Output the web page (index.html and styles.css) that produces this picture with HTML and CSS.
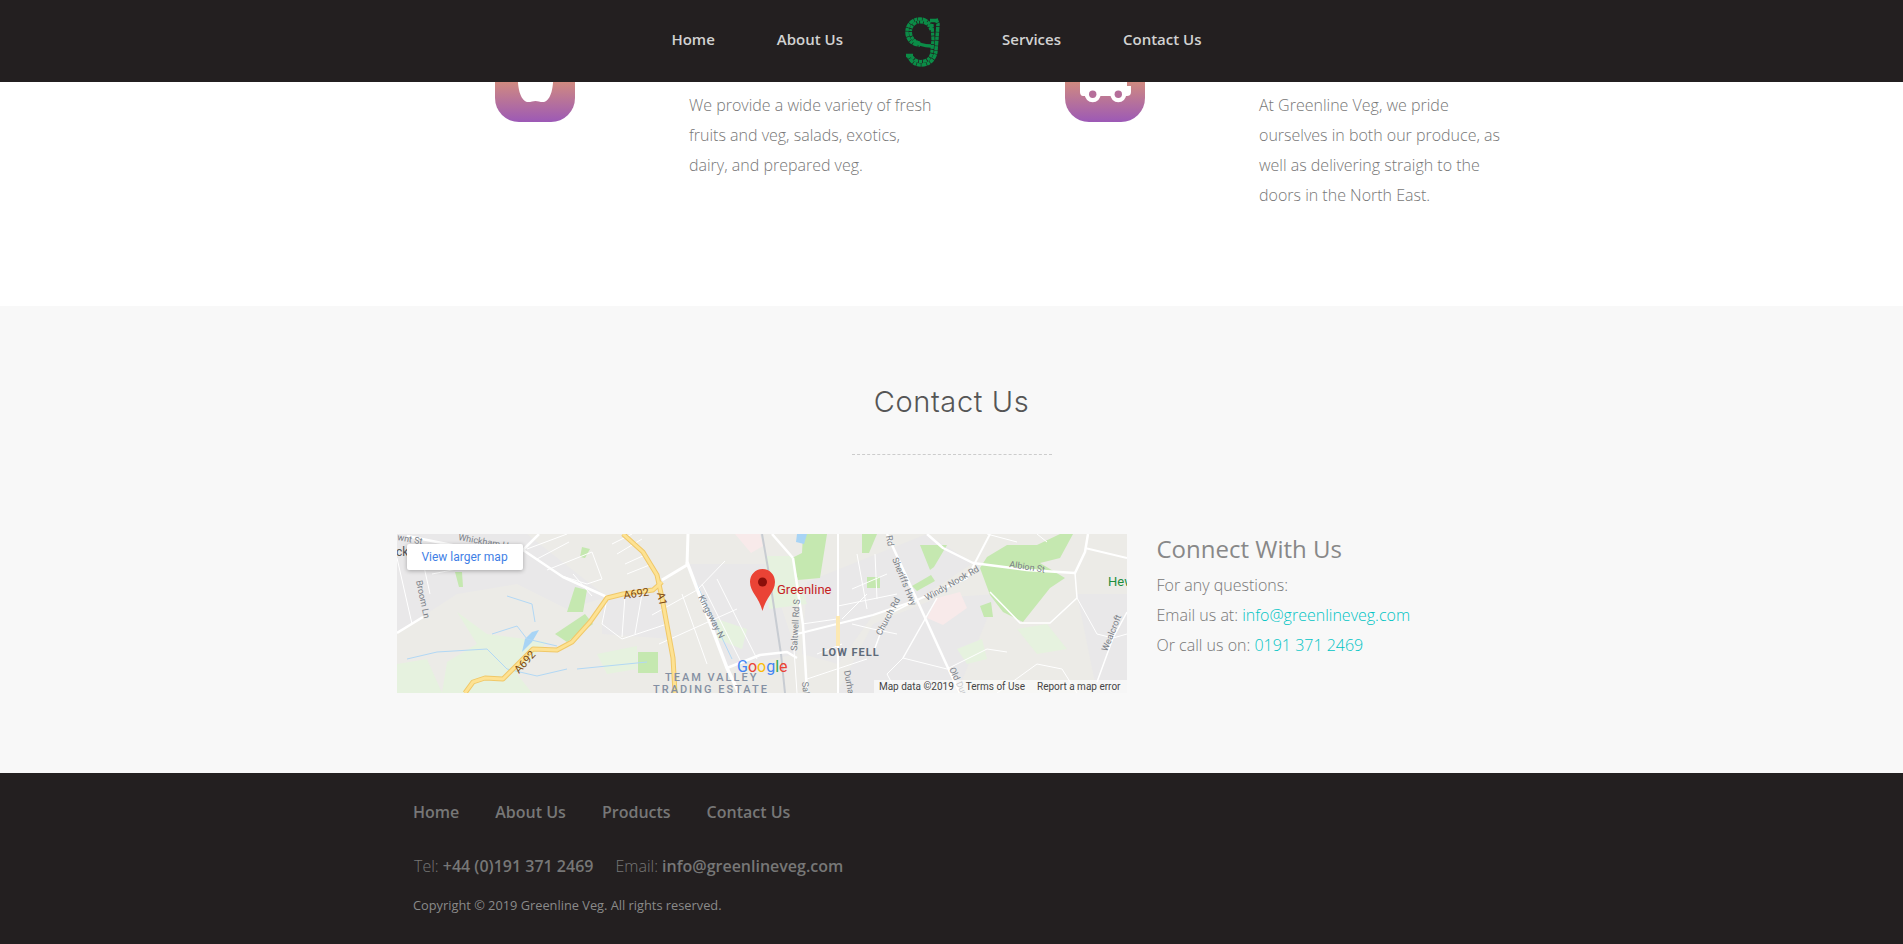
FILE: index.html
```html
<!DOCTYPE html>
<html lang="en">
<head>
    <meta charset="UTF-8">
    <meta name="viewport" content="width=device-width, initial-scale=1.0">
    <title>Greenline Veg</title>
    <link rel="stylesheet" href="styles.css">
</head>
<body>

    <!-- Fixed header, sits over the services row -->
    <header class="site-header">
        <nav class="main-nav">
            <a href="#">Home</a>
            <a href="#">About Us</a>
            <svg class="logo" viewBox="0 0 36 51" width="36" height="51" fill="none" stroke="#0b8c47">
                <path d="M27 12 C24 6 20 3 15 3 C7 3 2 9 2 16 C2 24 8 29 15 29" stroke-width="3.500" stroke-dasharray="4 .6 3 .6 5 .6"/>
                <path d="M26 14 C24 8 20 6 15 6 C9 6 5.500 11 5.500 16 C5.500 22 10 26 15 27" stroke-width="3" stroke-dasharray="3 .8 2 1 4 .8"/>
                <path d="M31 3 L33 8 L32 22 L31 34 C31 42 25 49 16 49 C10 49 5 45 3 39" stroke-width="3.500" stroke-dasharray="4 .6 3 .6 5 .6"/>
                <path d="M27 8 L28 24 L27 34 C27 41 23 45.500 16 45.500 C11 45.500 8 43 7 40" stroke-width="3.200" stroke-dasharray="3 .8 4 .8"/>
                <path d="M8 24 C14 29 20 30 26 30" stroke-width="3.500"/>
                <path d="M1 39.500 L8 39.500" stroke-width="3.500"/>
                <path d="M25 4.500 L33 4.500" stroke-width="3.500"/>
            </svg>
            <a href="#">Services</a>
            <a href="#">Contact Us</a>
        </nav>
    </header>

    <section class="services">
        <div class="container services-row">
            <div class="service">
                <div class="service-icon">
                    <svg viewBox="0 0 80 80" width="80" height="80" fill="#fff">
                        <path d="M23 30 H58 C59 45 56 58 49 60 C46 60.500 43 59 40.500 59 C38 59 35 60.500 32 60 C25 58 22 45 23 30 Z"/>
                    </svg>
                </div>
                <p class="service-text">We provide a wide variety of fresh fruits and veg, salads, exotics, dairy, and prepared veg.</p>
            </div>
            <div class="service">
                <div class="service-icon">
                    <svg viewBox="0 0 80 80" width="80" height="80" fill="#fff">
                        <path d="M15 30 H62 V44 H66 V50 C66 53 64 54 62 54 H18 C16 54 15 52 15 50 Z"/>
                        <circle cx="27.700" cy="52.300" r="8"/>
                        <circle cx="53.300" cy="52.300" r="8"/>
                        <circle cx="27.700" cy="52.300" r="3.700" fill="#b56e9a"/>
                        <circle cx="53.300" cy="52.300" r="3.700" fill="#b56e9a"/>
                    </svg>
                </div>
                <p class="service-text">At Greenline Veg, we pride ourselves in both our produce, as well as delivering straigh to the doors in the North East.</p>
            </div>
        </div>
    </section>

    <section class="contact">
        <h2 class="contact-title">Contact Us</h2>
        <div class="title-rule"></div>
        <div class="container contact-row">
            <div class="map">
                <svg class="map-art" viewBox="0 0 730 159" width="730" height="159">
                    <rect width="730" height="159" fill="#ecebe7"/>
                    <!-- built up areas -->
                    <g fill="#e9e8e9">
                        <path d="M0 0 H130 L210 63 L170 75 L120 50 L60 60 L0 99 Z"/>
                        <path d="M205 62 L262 50 L275 105 L205 100 Z"/>
                        <path d="M290 30 L370 30 L400 120 L330 134 Z"/>
                        <path d="M410 48 L530 0 L576 29 L520 66 L476 81 L441 130 L405 120 Z"/>
                        <path d="M540 64 L600 60 L560 159 H440 L476 90 Z"/>
                        <path d="M680 60 H730 V159 H700 Z"/>
                    </g>
                    <!-- parks -->
                    <g fill="#e6f2df">
                        <path d="M60 78 L90 100 L150 108 L120 140 L135 159 H45 L50 128 L80 110 Z"/>
                        <path d="M0 130 L30 125 L45 159 H0 Z"/>
                        <path d="M368 22 H395 L401 46 L410 70 L372 75 Z"/>
                        <path d="M620 95 L650 90 L670 115 L640 120 Z"/>
                        <path d="M560 115 L585 105 L590 125 L570 130 Z"/>
                        <path d="M320 85 L350 95 L345 115 L320 105 Z"/>
                        <path d="M200 120 L240 112 L240 135 L210 140 Z"/>
                    </g>
                    <g fill="#c5e8b0">
                        <path d="M406 0 H430 L423 44 L401 46 L395 24 L405 19 Z"/>
                        <path d="M465 0 H480 L472 19 L465 19 Z"/>
                        <path d="M470 43 H483 V54 H470 Z"/>
                        <path d="M523 11 L550 11 L537 33 L533 36 Z"/>
                        <path d="M515 52 L534 41 L538 47 L520 57 Z"/>
                        <path d="M590 23 L610 11 L640 11 L663 0 H676 L663 24 L643 29 L668 44 L653 54 L626 88 L606 78 L593 61 L583 34 Z"/>
                        <path d="M583 72 L594 68 L596 83 L587 83 Z"/>
                        <path d="M178 53 L190 56 L186 78 L170 78 Z"/>
                        <path d="M188 80 L196 90 L170 108 L158 100 Z"/>
                        <path d="M241 118 H261 V139 H241 Z"/>
                        <path d="M58 38 L65 38 L66 53 L62 53 Z"/>
                        <path d="M185 13 L193 15 L188 24 L183 23 Z"/>
                    </g>
                    <path d="M530 84 L540 64 L563 58 L570 74 L546 91 Z" fill="#f8eaea"/>
                    <path d="M338 0 H363 L366 12 L354 19 Z" fill="#f8eaea"/>
                    <!-- water -->
                    <g fill="#a8d4f5">
                        <path d="M125 118 L135 108 L142 96 L135 98 L128 105 Z"/>
                        <path d="M400 0 H410 L407 10 L399 8 Z"/>
                    </g>
                    <g fill="none" stroke="#b2d8f5" stroke-width="1">
                        <path d="M110 62 L135 70 L138 88"/>
                        <path d="M95 100 L120 92 L130 105 L160 112"/>
                        <path d="M10 125 L40 118 L90 115 L110 135 L140 142 L170 135"/>
                        <path d="M180 135 L250 128"/>
                        <path d="M290 30 L335 125"/>
                    </g>
                    <!-- railway -->
                    <path d="M365 0 L372 40 L384 120 L388 159" fill="none" stroke="#c8ccd2" stroke-width="2"/>
                    <!-- small roads -->
                    <g fill="none" stroke="#fff" stroke-width="1">
                        <path d="M0 24 L15 90"/>
                        <path d="M26 28 L33 60 M35 40 L60 35"/>
                        <path d="M130 15 L170 0 M140 25 L172 8 M150 36 L195 18 L205 45 L190 50 L165 42 M176 40 L195 62"/>
                        <path d="M215 10 L235 0 M220 20 L245 5 M228 30 L250 20 M230 40 L255 30"/>
                        <path d="M210 65 L205 90 L225 105 L255 95 L270 90"/>
                        <path d="M228 62 L225 103 M245 60 L238 100"/>
                        <path d="M255 81 L300 56 L328 27 M262 110 L340 75 M285 60 L310 130 M305 50 L345 130 M320 45 L360 125"/>
                        <path d="M460 20 L470 75 M478 20 L480 65 M441 72 L500 60 M445 85 L470 60 M455 55 L490 40"/>
                        <path d="M396 101 L400 159 M405 90 L440 85 M410 145 L470 125 M420 120 L445 110"/>
                        <path d="M455 90 L476 95 L500 100 M506 124 L490 140 L500 159"/>
                        <path d="M506 124 L550 135 L590 115 L610 118"/>
                        <path d="M600 159 L640 130 L665 135 L680 159 M680 64 L700 100 L716 104 L730 100"/>
                        <path d="M590 0 L620 8 M640 0 L650 8"/>
                    </g>
                    <!-- main white roads -->
                    <g fill="none" stroke="#fff" stroke-linejoin="round">
                        <path d="M0 99 L26 83" stroke-width="2.500"/>
                        <path d="M10 2 L60 12 L126 16 L166 43 L210 63" stroke-width="2.500"/>
                        <path d="M126 16 L142 0" stroke-width="2.500"/>
                        <path d="M265 46 L290 31 L291 0" stroke-width="3"/>
                        <path d="M290 28 L330 134 L342 159" stroke-width="3.500"/>
                        <path d="M330 134 L363 121 L390 118 L400 124" stroke-width="2.500"/>
                        <path d="M396 24 L406 91 L410 159" stroke-width="2.500"/>
                        <path d="M375 0 L396 24" stroke-width="2.500"/>
                        <path d="M441 0 V159" stroke-width="2"/>
                        <path d="M490 0 L520 66 L551 134 L563 159" stroke-width="2.500"/>
                        <path d="M396 101 L476 81 L520 66 L570 44 L593 0" stroke-width="2"/>
                        <path d="M530 0 L546 14 L576 29 L630 36 L678 39 L688 18 L691 0" stroke-width="2.500"/>
                        <path d="M688 14 L730 24" stroke-width="2"/>
                        <path d="M478 114 L490 81 L520 66" stroke-width="1.500"/>
                        <path d="M506 124 L540 64" stroke-width="1.500"/>
                        <path d="M678 39 L680 64 L653 89 L623 89 L593 58" stroke-width="1.500"/>
                        <path d="M700 148 L716 104 L730 78" stroke-width="1.500"/>
                    </g>
                    <!-- yellow roads -->
                    <g fill="none" stroke-linejoin="round">
                        <path d="M68 159 L76 148 L88 144 L106 145 L136 115 L160 116 L175 108 L193 88 L210 64 L226 60 L256 56 L265 48" stroke="#f0c868" stroke-width="5"/>
                        <path d="M226 0 L246 18 L260 41 L265 64 L276 124 L278 159" stroke="#f0c868" stroke-width="5"/>
                        <path d="M68 159 L76 148 L88 144 L106 145 L136 115 L160 116 L175 108 L193 88 L210 64 L226 60 L256 56 L265 48" stroke="#fde293" stroke-width="3"/>
                        <path d="M226 0 L246 18 L260 41 L265 64 L276 124 L278 159" stroke="#fde293" stroke-width="3"/>
                        <path d="M441 82 V112" stroke="#fce8b2" stroke-width="4"/>
                    </g>
                    <!-- labels -->
                    <g class="map-label">
                        <text x="0" y="6" transform="rotate(10 0 6)">wnt St</text>
                        <text x="61" y="6" transform="rotate(10 61 6)">Whickham Hwy</text>
                        <text x="19" y="47" transform="rotate(78 19 47)">Broom Ln</text>
                        <text x="301" y="63" transform="rotate(63 301 63)">Kingsway N</text>
                        <text x="400" y="117" transform="rotate(-87 400 117)">Saltwell Rd S</text>
                        <text x="495" y="25" transform="rotate(68 495 25)">Sheriffs Hwy</text>
                        <text x="530" y="67" transform="rotate(-30 530 67)">Windy Nook Rd</text>
                        <text x="484" y="102" transform="rotate(-62 484 102)">Church Rd</text>
                        <text x="612" y="33" transform="rotate(9 612 33)">Albion St</text>
                        <text x="710" y="118" transform="rotate(-68 710 118)">Wealcroft</text>
                        <text x="447" y="137" transform="rotate(80 447 137)">Durham</text>
                        <text x="552" y="135" transform="rotate(65 552 135)">Old Durh</text>
                        <text x="405" y="148" transform="rotate(85 405 148)">Salt</text>
                        <text x="489" y="2" transform="rotate(80 489 2)">Rd</text>
                        <text x="-1" y="22" class="map-label-dark">ck</text>
                    </g>
                    <g class="road-label">
                        <text x="227" y="65" transform="rotate(-8 227 65)">A692</text>
                        <text x="260" y="59" transform="rotate(78 260 59)">A1</text>
                        <text x="122" y="140" transform="rotate(-48 122 140)">A692</text>
                    </g>
                    <text x="268" y="147" class="area-label">TEAM VALLEY</text>
                    <text x="256" y="159" class="area-label">TRADING ESTATE</text>
                    <text x="425" y="122" class="area-label area-dark">LOW FELL</text>
                    <text x="711" y="52" class="park-label">Hew</text>
                    <text x="340" y="138" class="google-mark"><tspan fill="#4285f4">G</tspan><tspan fill="#ea4335">o</tspan><tspan fill="#fbbc05">o</tspan><tspan fill="#4285f4">g</tspan><tspan fill="#34a853">l</tspan><tspan fill="#ea4335">e</tspan></text>
                    <!-- pin -->
                    <path d="M365.500 35 C358 35 353 41 353 48 C353 58 362 63 365.500 77 C369 63 378 58 378 48 C378 41 373 35 365.500 35 Z" fill="#ea4335"/>
                    <circle cx="365.500" cy="48" r="4.500" fill="#8b0f0a"/>
                    <text x="380" y="60" class="pin-label">Greenline</text>
                </svg>
                <a class="map-link" href="#">View larger map</a>
                <div class="map-legal">
                    <span>Map data ©2019</span>
                    <span>Terms of Use</span>
                    <span>Report a map error</span>
                </div>
            </div>
            <div class="connect">
                <h3>Connect With Us</h3>
                <p>For any questions:</p>
                <p>Email us at: <a href="#">info@greenlineveg.com</a></p>
                <p>Or call us on: <a href="#">0191 371 2469</a></p>
            </div>
        </div>
    </section>

    <footer class="site-footer">
        <div class="container footer-inner">
            <nav class="footer-nav">
                <a href="#">Home</a>
                <a href="#">About Us</a>
                <a href="#">Products</a>
                <a href="#">Contact Us</a>
            </nav>
            <p class="footer-contact">
                <span>Tel: <b>+44 (0)191 371 2469</b></span>
                <span>Email: <b>info@greenlineveg.com</b></span>
            </p>
            <p class="copyright">Copyright © 2019 Greenline Veg. All rights reserved.</p>
        </div>
    </footer>

</body>
</html>
```

FILE: styles.css
```css
/* Global Styles */
html, body {
    margin: 0;
    padding: 0;
    font-family: 'Open Sans', sans-serif;
    background: #fff;
}

a {
    text-decoration: none;
    color: inherit;
}

.container {
    width: 1140px;
    margin: 0 auto;
}

/* Header */
.site-header {
    position: fixed;
    top: 0;
    left: 0;
    width: 100%;
    height: 82px;
    background: #231f20;
    z-index: 10;
}

.main-nav {
    display: flex;
    justify-content: center;
    align-items: center;
    height: 82px;
    gap: 62px;
    color: #d2d2d2;
    font-size: 15px;
    font-weight: 600;
    padding: 0 30px 4px 0;
    box-sizing: border-box;
}

.logo {
    margin: 5px -1px 0 0;
}

/* Services */
.services {
    height: 306px;
    box-sizing: border-box;
    padding-top: 42px;
    overflow: hidden;
}

.services-row {
    display: flex;
}

.service {
    width: 570px;
    box-sizing: border-box;
    padding-left: 113.5px;
    display: flex;
    gap: 114px;
}

.service-icon {
    width: 80px;
    height: 80px;
    flex: none;
    border-radius: 24px;
    background: linear-gradient(#e89a70, #d08a80 50%, #9c59b6);
}

.service-icon svg {
    display: block;
}

.service-text {
    width: 245px;
    margin: 48px 0 0;
    font-size: 16px;
    font-weight: 300;
    line-height: 30px;
    color: #777;
}

/* Contact */
.contact {
    height: 467px;
    box-sizing: border-box;
    padding-top: 75px;
    background: #f8f8f8;
}

.contact-title {
    margin: 0;
    font-family: Inter, sans-serif;
    font-size: 29px;
    font-weight: 300;
    letter-spacing: 0.6px;
    line-height: 42px;
    text-align: center;
    color: #555;
}

.title-rule {
    width: 200px;
    margin: 31px auto 79px;
    border-top: 1px dashed #ccc;
}

.contact-row {
    display: flex;
    padding-left: 15px;
    box-sizing: border-box;
    gap: 30px;
}

.map {
    position: relative;
    width: 730px;
    height: 159px;
    flex: none;
    overflow: hidden;
}

.map-art {
    display: block;
}

.map-art text {
    font-family: Roboto, sans-serif;
}

.map-label {
    font-size: 9px;
    fill: #7a7f87;
}

.map-label .map-label-dark {
    font-size: 12px;
    fill: #555;
}

.road-label {
    font-size: 11px;
    fill: #7d4a12;
}

.area-label {
    font-size: 11px;
    font-weight: 500;
    letter-spacing: 2px;
    fill: #8490a3;
}

.area-dark {
    letter-spacing: 1px;
    font-weight: 700;
    fill: #5f6b7a;
}

.park-label {
    font-size: 13px;
    fill: #1e8e3e;
}

.google-mark {
    font-size: 16px;
    font-weight: 400;
}

.pin-label {
    font-size: 13px;
    fill: #c5221f;
}

.map-link {
    position: absolute;
    top: 10px;
    left: 10px;
    width: 116px;
    height: 26px;
    line-height: 26px;
    text-align: center;
    background: #fff;
    border-radius: 2px;
    box-shadow: 0 1px 4px rgba(0, 0, 0, 0.3);
    font-family: Roboto, sans-serif;
    font-size: 12px;
    color: #3f7fe6;
}

.map-legal {
    position: absolute;
    right: 0;
    bottom: 0;
    display: flex;
    gap: 12px;
    height: 13px;
    line-height: 13px;
    padding: 0 6px 0 5px;
    background: rgba(255, 255, 255, 0.6);
    font-family: Roboto, sans-serif;
    font-size: 10px;
    color: #444;
}

.connect h3 {
    margin: 0 0 6px;
    font-size: 24px;
    font-weight: 400;
    line-height: 30px;
    color: #888;
}

.connect p {
    margin: 0;
    font-size: 16px;
    font-weight: 300;
    line-height: 30px;
    color: #777;
}

.connect a {
    color: #00c4c4;
}

/* Footer */
.site-footer {
    height: 171px;
    box-sizing: border-box;
    padding-top: 27px;
    background: #231f20;
    color: #777;
}

.footer-inner {
    box-sizing: border-box;
    padding-left: 31.5px;
}

.footer-nav {
    display: flex;
    gap: 36px;
    font-size: 16px;
    font-weight: 600;
    line-height: 24px;
}

.footer-contact {
    display: flex;
    gap: 22px;
    margin: 30px 0 0 1px;
    font-size: 16px;
    font-weight: 300;
    line-height: 24px;
}

.footer-contact b {
    font-weight: 600;
}

.copyright {
    margin: 17px 0 0;
    font-size: 12.8px;
    line-height: 20px;
    color: #8a8a8a;
}
```
